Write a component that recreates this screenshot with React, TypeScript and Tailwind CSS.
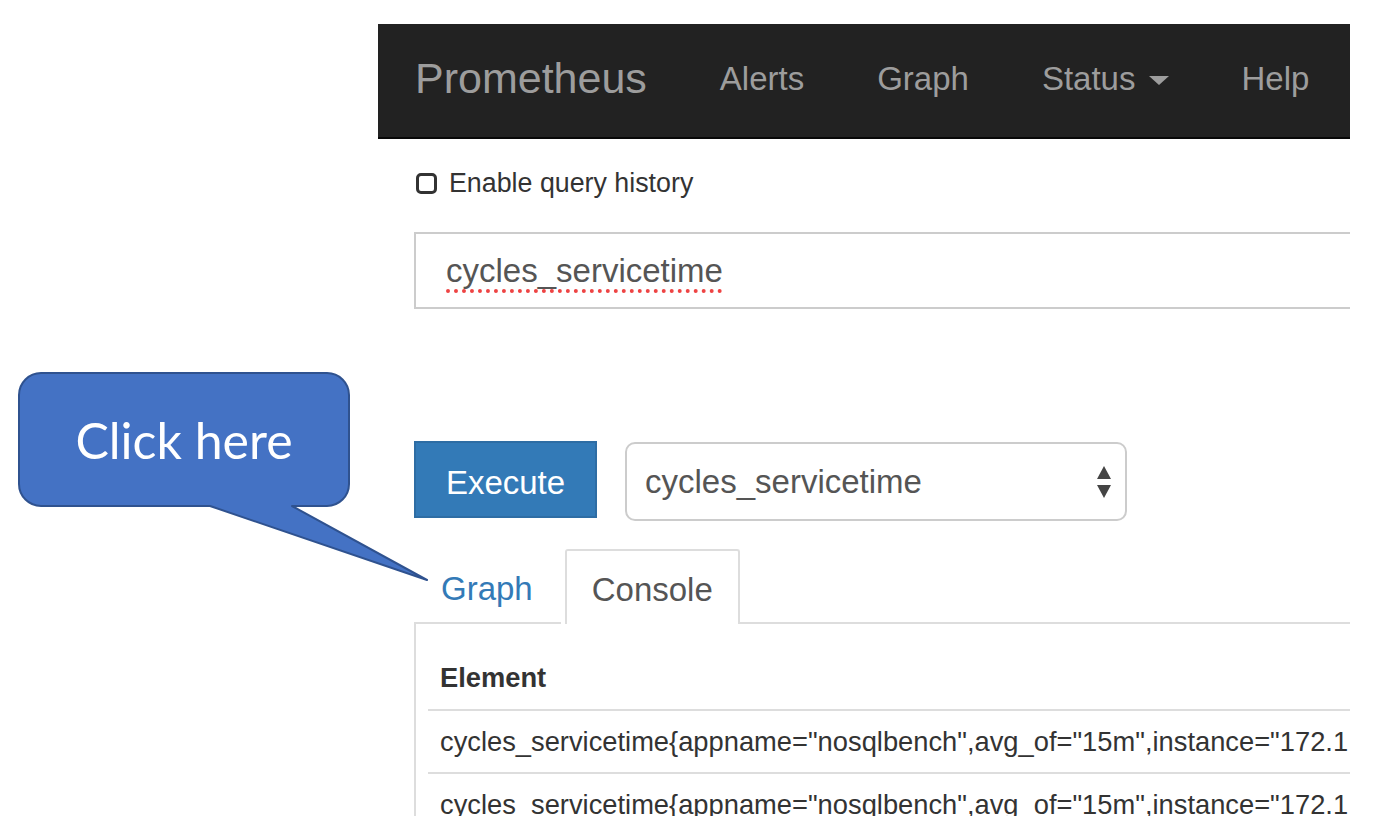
import React from 'react'

const navItems = ['Alerts', 'Graph']

const rows = [
    'cycles_servicetime{appname="nosqlbench",avg_of="15m",instance="172.1',
    'cycles_servicetime{appname="nosqlbench",avg_of="15m",instance="172.1',
]

const Callout = () => {
    return (
        <div className="absolute left-0 top-0 w-[440px] h-[600px] pointer-events-none">
            <svg width="440" height="600" viewBox="0 0 440 600" className="absolute left-0 top-0">
                <path
                    d="M41 373 H327 A22 22 0 0 1 349 395 V484 A22 22 0 0 1 327 506 H292 L427 580 L210 506 H41 A22 22 0 0 1 19 484 V395 A22 22 0 0 1 41 373 Z"
                    fill="#4472C4"
                    stroke="#2F528F"
                    strokeWidth="2"
                    strokeLinejoin="round"
                />
            </svg>
            <div className="absolute left-[19px] top-[373px] w-[330px] h-[133px] flex items-center justify-center">
                <span className="text-white text-[50px] font-['Lato',sans-serif] leading-none">Click here</span>
            </div>
        </div>
    )
}

const App = () => {
    return (
        <div className="relative w-[1376px] h-[832px] bg-white overflow-hidden">
            <div className="ml-[378px] mt-[24px] w-[972px] h-[792px] overflow-hidden font-['Liberation_Sans',Arial,sans-serif]">
                {/* navbar */}
                <div className="h-[115px] bg-[#222222] border-b-2 border-[#080808] flex items-center pl-[37px] pb-[4px] text-[#9d9d9d]">
                    <span className="text-[43px] leading-none mr-[73px]">Prometheus</span>
                    {navItems.map((item) => (
                        <span key={item} className="text-[33px] leading-none mr-[73px]">{item}</span>
                    ))}
                    <span className="text-[33px] leading-none flex items-center mr-[72px]">
                        Status
                        <svg width="20" height="9" viewBox="0 0 20 9" className="ml-[14px] mt-[4px]">
                            <path d="M0 0 H20 L10 9 Z" fill="#9d9d9d"/>
                        </svg>
                    </span>
                    <span className="text-[33px] leading-none">Help</span>
                </div>

                <div className="pl-[36px]">
                    {/* history checkbox */}
                    <div className="mt-[29px] h-[30px] flex items-center">
                        <div className="ml-[2px] w-[21px] h-[21px] rounded-[5px] border-[3px] border-[#333]"/>
                        <span className="ml-[12px] text-[26.8px] text-[#333] leading-none">Enable query history</span>
                    </div>

                    {/* expression input */}
                    <div className="mt-[34px] h-[77px] border-2 border-[#cccccc] border-r-0 flex items-center pl-[30px]">
                        <span className="text-[33px] text-[#555] leading-none underline decoration-dotted decoration-[#ee4444] decoration-[4px] underline-offset-[7px]">
                            cycles_servicetime
                        </span>
                    </div>

                    {/* execute + metric select */}
                    <div className="mt-[132px] flex items-start gap-[28px]">
                        <button
                            type="button"
                            className="w-[183px] h-[77px] pt-[5px] bg-[#337ab7] border-2 border-[#2e6da4] text-white text-[33px] leading-none"
                        >
                            Execute
                        </button>
                        <div className="mt-[1px] w-[502px] h-[79px] border-2 border-[#cccccc] rounded-[10px] flex items-center justify-between pl-[18px] pr-[13px]">
                            <span className="text-[33px] text-[#555] leading-none">cycles_servicetime</span>
                            <svg width="16" height="32" viewBox="0 0 16 32">
                                <path d="M8 0 L15 13 H1 Z" fill="#444"/>
                                <path d="M1 19 H15 L8 32 Z" fill="#444"/>
                            </svg>
                        </div>
                    </div>

                    {/* tabs */}
                    <div className="mt-[28px] flex items-end">
                        <div className="h-[75px] flex items-center pt-[5px] pl-[27px] pr-[28px] mr-[4px] border-b-2 border-[#dddddd]">
                            <span className="text-[33px] text-[#337ab7] leading-none">Graph</span>
                        </div>
                        <div className="h-[75px] flex items-center pt-[4px] px-[25px] border-2 border-b-0 border-[#dddddd] rounded-t-[3px]">
                            <span className="text-[33px] text-[#555] leading-none">Console</span>
                        </div>
                        <div className="flex-1 h-[75px] border-b-2 border-[#dddddd]"/>
                    </div>

                    {/* console panel */}
                    <div className="border-l-2 border-[#dddddd] pt-[22px] pl-[12px] h-[220px]">
                        <div className="text-[27.3px] text-[#333] leading-[31px] whitespace-nowrap">
                            <div className="px-[12px] py-[16px] font-bold">Element</div>
                            {rows.map((row, i) => (
                                <div key={i} className="border-t-2 border-[#dddddd] px-[12px] py-[15px]">
                                    {row}
                                </div>
                            ))}
                        </div>
                    </div>
                </div>
            </div>
            <Callout/>
        </div>
    )
}

export default App
